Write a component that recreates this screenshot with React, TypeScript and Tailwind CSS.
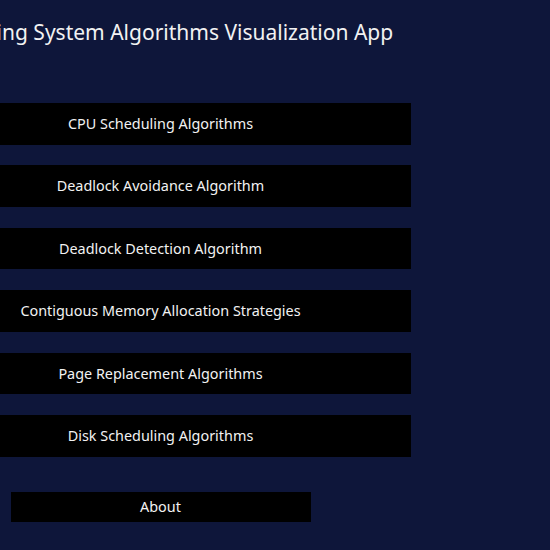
const items = [
  "CPU Scheduling Algorithms",
  "Deadlock Avoidance Algorithm",
  "Deadlock Detection Algorithm",
  "Contiguous Memory Allocation Strategies",
  "Page Replacement Algorithms",
  "Disk Scheduling Algorithms",
];

export default function App() {
  return (
    <div className="w-[550px] h-[550px] overflow-hidden bg-[#0e163a] font-['Noto_Sans',sans-serif] text-[#f2f2f2]">
      <div className="w-[321px] flex flex-col items-center">
        <h1 className="mt-[16px] text-[21px] leading-[32px] whitespace-nowrap">
          Operating System Algorithms Visualization App
        </h1>
        <div className="mt-[55px] flex flex-col items-center gap-[20.8px]">
          {items.map((label) => (
            <button
              key={label}
              className="w-[501px] h-[41.6px] bg-black text-[14.4px] flex items-center justify-center whitespace-nowrap"
            >
              {label}
            </button>
          ))}
        </div>
        <button className="mt-[35px] w-[300px] h-[30px] bg-black text-[14.4px] flex items-center justify-center">
          About
        </button>
      </div>
    </div>
  );
}
